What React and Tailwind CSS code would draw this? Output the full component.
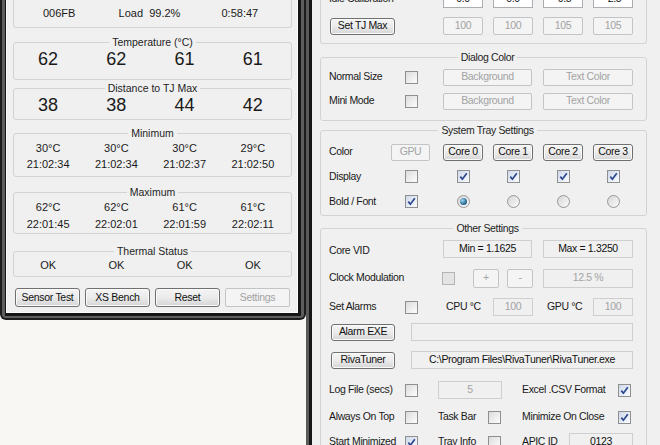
import React from 'react';

function Group({ title, className = '', children }) {
  return (
    <fieldset className={`border border-[#d3d3d3] rounded-[3px] ${className}`}>
      <legend align="center" className="mx-auto px-[3px] text-[10.5px] leading-[12px] text-[#1e1e1e]">
        {title}
      </legend>
      {children}
    </fieldset>
  );
}

function Btn({ className = '', children }) {
  return (
    <div className={`shrink-0 flex items-center justify-center rounded-[3px] border border-[#707070] bg-linear-to-b from-[#f4f4f4] via-[#ebebeb] to-[#d5d5d5] shadow-[inset_0_0_0_1px_#fbfbfb] text-[10.5px] text-[#111] ${className}`}>
      {children}
    </div>
  );
}

function DisBtn({ className = '', children }) {
  return (
    <div className={`shrink-0 flex items-center justify-center rounded-[2px] border border-[#c2c4c6] bg-[#f4f4f4] text-[10.5px] text-[#a3a3a3] ${className}`}>
      {children}
    </div>
  );
}

function Box({ className = '', dim, white, children }) {
  return (
    <div className={`shrink-0 flex items-center justify-center border ${white ? 'border-[#abadb3] bg-white' : 'border-[#cfcfcf] bg-[#f0f0f0]'} text-[10.5px] ${dim ? 'text-[#a3a3a3]' : 'text-[#111]'} ${className}`}>
      {children}
    </div>
  );
}

function Check({ checked, disabled }) {
  return (
    <span className={`shrink-0 w-[13px] h-[13px] border flex items-center justify-center ${disabled ? 'border-[#b4b4b4] bg-[#e4e4e4]' : checked ? 'border-[#8e8f8f] bg-linear-to-br from-[#cfd8ea] to-[#fbfcff]' : 'border-[#8e8f8f] bg-linear-to-br from-[#dcdcdc] to-[#fdfdfd]'}`}>
      {checked && (
        <svg width="9" height="9" viewBox="0 0 9 9">
          <path d="M1.3 4.6 L3.4 7.2 L7.8 1.3" fill="none" stroke="#2c4790" strokeWidth="1.7" />
        </svg>
      )}
    </span>
  );
}

function Radio({ on }) {
  return (
    <span className="shrink-0 w-[13px] h-[13px] rounded-full border border-[#979797] bg-linear-to-br from-[#d6d6d6] to-[#fbfbfb] flex items-center justify-center">
      {on && <span className="w-[7px] h-[7px] rounded-full bg-[radial-gradient(circle_at_35%_35%,#9ad6f2,#1c5e86_70%)]" />}
    </span>
  );
}

function Cell({ children }) {
  return <div className="w-[40px] shrink-0 flex justify-center">{children}</div>;
}

const cores = ['Core 0', 'Core 1', 'Core 2', 'Core 3'];

function LeftWindow() {
  const temps = [62, 62, 61, 61];
  const dist = [38, 38, 44, 42];
  const minT = ['30°C', '30°C', '30°C', '29°C'];
  const minTime = ['21:02:34', '21:02:34', '21:02:37', '21:02:50'];
  const maxT = ['62°C', '62°C', '61°C', '61°C'];
  const maxTime = ['22:01:45', '22:02:01', '22:01:59', '22:02:11'];

  return (
    <div className="absolute left-0 top-0 w-[306px] h-[320px] bg-[#1c1c1c] rounded-b-[6px] pl-[2px] pr-[2px] pb-[2px]">
      <div className="h-full bg-[#5e5e5e] rounded-b-[4px] pl-[3px] pr-[3px] pb-[2px]">
        <div className="h-full bg-[#151515] pl-[1px] pr-[3px] pb-[3px]">
          <div className="h-full bg-[#f0f0f0] border-x border-b border-[#fbfbfb] pl-[6px] pr-[5px] flex flex-col">
            <div className="h-[28px] border-x border-b border-[#d3d3d3] rounded-b-[3px] grid grid-cols-3 items-center pr-[6px] text-[11px]">
              <div className="text-center">006FB</div>
              <div className="text-center">Load&nbsp; 99.2%</div>
              <div className="text-center">0:58:47</div>
            </div>

            <Group title="Temperature (°C)" className="mt-[8px] h-[44px]">
              <div className="grid grid-cols-4 h-[22px] items-center pr-[4px] text-[18px] leading-none">
                {temps.map((t, i) => <div key={i} className="text-center">{t}</div>)}
              </div>
            </Group>

            <Group title="Distance to TJ Max" className="mt-[2px] h-[38px]">
              <div className="grid grid-cols-4 h-[22px] items-center pr-[4px] text-[18px] leading-none">
                {dist.map((t, i) => <div key={i} className="text-center">{t}</div>)}
              </div>
            </Group>

            <Group title="Minimum" className="mt-[7px] h-[50px]">
              <div className="grid grid-cols-4 mt-[1px] h-[16px] items-center pr-[4px] text-[11px]">
                {minT.map((t, i) => <div key={i} className="text-center">{t}</div>)}
              </div>
              <div className="grid grid-cols-4 h-[16px] items-center pr-[4px] text-[11px]">
                {minTime.map((t, i) => <div key={i} className="text-center">{t}</div>)}
              </div>
            </Group>

            <Group title="Maximum" className="mt-[9px] h-[48px]">
              <div className="grid grid-cols-4 mt-[1px] h-[16px] items-center pr-[4px] text-[11px]">
                {maxT.map((t, i) => <div key={i} className="text-center">{t}</div>)}
              </div>
              <div className="grid grid-cols-4 mt-[1px] h-[16px] items-center pr-[4px] text-[11px]">
                {maxTime.map((t, i) => <div key={i} className="text-center">{t}</div>)}
              </div>
            </Group>

            <Group title="Thermal Status" className="mt-[11px] h-[32px]">
              <div className="grid grid-cols-4 h-[14px] items-center pr-[4px] text-[11px]">
                {['OK', 'OK', 'OK', 'OK'].map((t, i) => <div key={i} className="text-center">{t}</div>)}
              </div>
            </Group>

            <div className="mt-[11px] flex gap-[5px] pl-[2px] tracking-[-0.3px]">
              <Btn className="w-[65px] h-[19px]">Sensor Test</Btn>
              <Btn className="w-[65px] h-[19px]">XS Bench</Btn>
              <Btn className="w-[65px] h-[19px]">Reset</Btn>
              <DisBtn className="w-[65px] h-[19px]">Settings</DisBtn>
            </div>
          </div>
        </div>
      </div>
    </div>
  );
}

function RightWindow() {
  return (
    <div className="absolute left-[306px] top-0 right-0 bottom-0 border-l-[3px] border-[#5a5a5a]">
      <div className="h-full border-l-[3px] border-[#161616] bg-[#f0f0f0] overflow-hidden pl-[8px] tracking-[-0.35px]">
        <div className="w-[327px] flex flex-col">
          <div className="-mt-[12px] h-[56px] border-x border-b border-[#d3d3d3] rounded-b-[3px] pl-[8px]">
            <div className="flex items-center h-[22px]">
              <span className="w-[114px] shrink-0">Idle Calibration</span>
              <div className="flex gap-[10px]">
                {['0.0', '0.0', '-0.5', '-2.5'].map((v, i) => (
                  <Box key={i} white className="w-[40px] h-[18px]">{v}</Box>
                ))}
              </div>
            </div>
            <div className="flex items-center h-[22px] mt-[5px]">
              <div className="w-[114px] shrink-0">
                <Btn className="w-[65px] h-[17px] ml-[1px]">Set TJ Max</Btn>
              </div>
              <div className="flex gap-[10px]">
                {['100', '100', '105', '105'].map((v, i) => (
                  <DisBtn key={i} className="w-[40px] h-[18px]">{v}</DisBtn>
                ))}
              </div>
            </div>
          </div>

          <Group title="Dialog Color" className="mt-[7px] h-[70px] pl-[8px]">
            <div className="mt-[2px] flex items-center h-[24px]">
              <span className="w-[76px] shrink-0">Normal Size</span>
              <Check />
              <DisBtn className="ml-[25px] w-[89px] h-[17px]">Background</DisBtn>
              <DisBtn className="ml-[11px] w-[90px] h-[17px]">Text Color</DisBtn>
            </div>
            <div className="flex items-center h-[24px]">
              <span className="w-[76px] shrink-0">Mini Mode</span>
              <Check />
              <DisBtn className="ml-[25px] w-[89px] h-[17px]">Background</DisBtn>
              <DisBtn className="ml-[11px] w-[90px] h-[17px]">Text Color</DisBtn>
            </div>
          </Group>

          <Group title="System Tray Settings" className="mt-[3px] h-[92px] pl-[8px]">
            <div className="mt-[4px] flex items-center h-[24px]">
              <span className="w-[62px] shrink-0">Color</span>
              <DisBtn className="w-[39px] h-[17px]">GPU</DisBtn>
              <div className="ml-[13px] flex gap-[10px]">
                {cores.map((c) => <Btn key={c} className="w-[40px] h-[17px]">{c}</Btn>)}
              </div>
            </div>
            <div className="flex items-center h-[25px]">
              <span className="w-[76px] shrink-0">Display</span>
              <Check />
              <div className="ml-[25px] flex gap-[10px]">
                {cores.map((c) => <Cell key={c}><Check checked /></Cell>)}
              </div>
            </div>
            <div className="flex items-center h-[25px]">
              <span className="w-[76px] shrink-0">Bold / Font</span>
              <Check checked />
              <div className="ml-[25px] flex gap-[10px]">
                {cores.map((c, i) => <Cell key={c}><Radio on={i === 0} /></Cell>)}
              </div>
            </div>
          </Group>

          <Group title="Other Settings" className="mt-[6px] h-[260px] pl-[8px]">
            <div className="mt-[5px] flex items-center h-[20px]">
              <span className="w-[114px] shrink-0 pt-[4px]">Core VID</span>
              <Box className="w-[89px] h-[18px]">Min = 1.1625</Box>
              <Box className="ml-[11px] w-[90px] h-[18px]">Max = 1.3250</Box>
            </div>
            <div className="mt-[9px] flex items-center h-[20px]">
              <span className="w-[113px] shrink-0">Clock Modulation</span>
              <Check disabled />
              <DisBtn className="ml-[18px] w-[26px] h-[19px]">+</DisBtn>
              <DisBtn className="ml-[8px] w-[26px] h-[19px]">-</DisBtn>
              <Box dim className="ml-[10px] w-[90px] h-[19px]">12.5 %</Box>
            </div>
            <div className="mt-[9px] flex items-center h-[20px]">
              <span className="w-[76px] shrink-0">Set Alarms</span>
              <Check />
              <span className="ml-[28px] w-[47px] shrink-0">CPU °C</span>
              <Box dim className="w-[40px] h-[18px]">100</Box>
              <span className="ml-[14px] w-[46px] shrink-0">GPU °C</span>
              <Box dim className="w-[40px] h-[18px]">100</Box>
            </div>
            <div className="mt-[5px] flex items-center h-[20px]">
              <Btn className="ml-[2px] w-[64px] h-[17px]">Alarm EXE</Btn>
              <Box className="ml-[16px] w-[222px] h-[18px]" />
            </div>
            <div className="mt-[8px] flex items-center h-[20px]">
              <Btn className="ml-[2px] w-[64px] h-[17px]">RivaTuner</Btn>
              <Box className="ml-[16px] w-[222px] h-[18px]">{'C:\\Program Files\\RivaTuner\\RivaTuner.exe'}</Box>
            </div>
            <div className="mt-[10px] flex items-center h-[20px]">
              <span className="w-[76px] shrink-0">Log File (secs)</span>
              <Check />
              <Box dim className="ml-[20px] w-[64px] h-[18px]">5</Box>
              <span className="ml-[20px] w-[96px] shrink-0">Excel .CSV Format</span>
              <Check checked />
            </div>
            <div className="mt-[7px] flex items-center h-[20px]">
              <span className="w-[76px] shrink-0">Always On Top</span>
              <Check />
              <span className="ml-[20px] w-[50px] shrink-0">Task Bar</span>
              <Check />
              <span className="ml-[21px] w-[96px] shrink-0">Minimize On Close</span>
              <Check checked />
            </div>
            <div className="mt-[5px] flex items-center h-[20px]">
              <span className="w-[76px] shrink-0">Start Minimized</span>
              <Check checked />
              <span className="ml-[20px] w-[50px] shrink-0">Tray Info</span>
              <Check />
              <span className="ml-[21px] w-[47px] shrink-0">APIC ID</span>
              <Box className="w-[64px] h-[18px]">0123</Box>
            </div>
          </Group>
        </div>
      </div>
    </div>
  );
}

export default function App() {
  return (
    <div className="relative w-[660px] h-[445px] overflow-hidden bg-[#f8f7f4] font-['Liberation_Sans',Arial,sans-serif] text-[10.5px] text-[#1a1a1a]">
      <LeftWindow />
      <RightWindow />
    </div>
  );
}
